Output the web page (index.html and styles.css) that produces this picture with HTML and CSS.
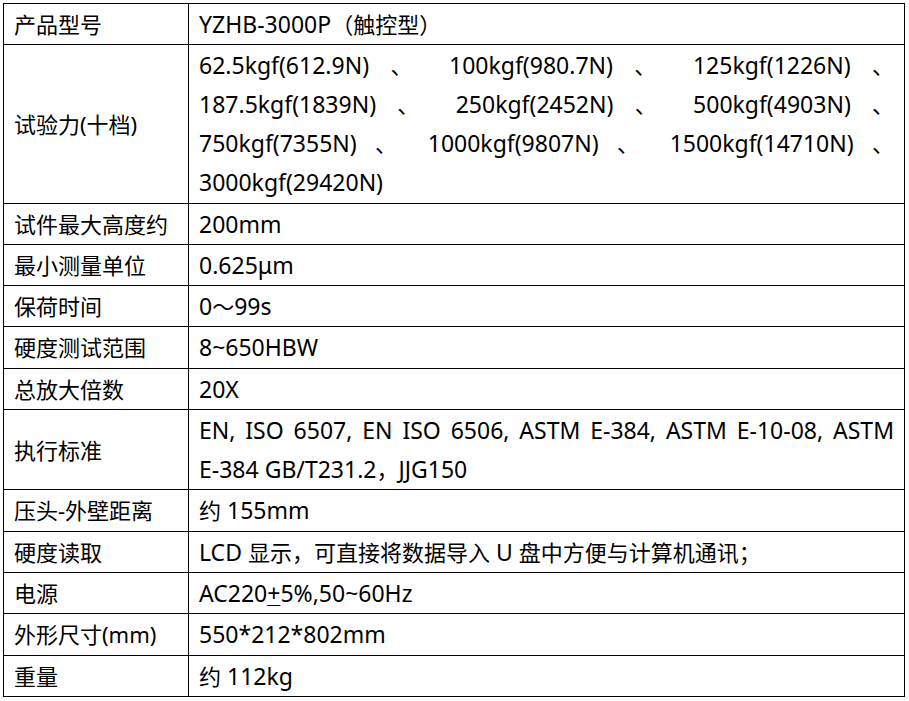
FILE: index.html
```html
<!DOCTYPE html>
<html lang="zh-CN">
<head>
<meta charset="utf-8">
<title>参数</title>
<link rel="stylesheet" href="styles.css">
</head>
<body>
<div class="page">
<table class="spec">
<tr><th>产品型号</th><td>YZHB-3000P<span class="zh">（触控型）</span></td></tr>
<tr><th>试验力(十档)</th><td>
<div class="jl">62.5kgf(612.9N) <span class="zh">、</span> 100kgf(980.7N) <span class="zh">、</span> 125kgf(1226N) <span class="zh">、</span></div>
<div class="jl">187.5kgf(1839N) <span class="zh">、</span> 250kgf(2452N) <span class="zh">、</span> 500kgf(4903N) <span class="zh">、</span></div>
<div class="jl">750kgf(7355N) <span class="zh">、</span> 1000kgf(9807N) <span class="zh">、</span> 1500kgf(14710N) <span class="zh">、</span></div>
<div>3000kgf(29420N)</div>
</td></tr>
<tr><th>试件最大高度约</th><td>200mm</td></tr>
<tr><th>最小测量单位</th><td>0.625μm</td></tr>
<tr><th>保荷时间</th><td>0<span class="zh">～</span>99s</td></tr>
<tr><th>硬度测试范围</th><td>8~650HBW</td></tr>
<tr><th>总放大倍数</th><td>20X</td></tr>
<tr><th>执行标准</th><td>
<div class="jl">EN, ISO 6507, EN ISO 6506, ASTM E-384, ASTM E-10-08, ASTM</div>
<div>E-384 GB/T231.2<span class="zh">，</span>JJG150</div>
</td></tr>
<tr><th>压头-外壁距离</th><td><span class="zh">约</span> 155mm</td></tr>
<tr><th>硬度读取</th><td>LCD <span class="zh">显示，可直接将数据导入</span> U <span class="zh">盘中方便与计算机通讯；</span></td></tr>
<tr><th>电源</th><td>AC220<u>+</u>5%,50~60Hz</td></tr>
<tr><th>外形尺寸(mm)</th><td>550*212*802mm</td></tr>
<tr><th>重量</th><td><span class="zh">约</span> 112kg</td></tr>
</table>
</div>
</body>
</html>
```
FILE: styles.css
```css
html, body {
  margin: 0;
  padding: 0;
  background: #ffffff;
}
.page {
  padding: 3px 0 0 3px;
}
.spec {
  border-collapse: collapse;
  width: 902px;
  font-family: "Noto Sans", "Noto Sans CJK SC", sans-serif;
  color: #000000;
}
.spec th,
.spec td {
  border: 1px solid #000000;
  padding: 1px 10px 0.3px 10px;
  line-height: 39px;
  font-weight: normal;
  text-align: left;
  vertical-align: middle;
  white-space: nowrap;
}
.spec th {
  width: 164px;
  font-size: 22px;
}
.spec td {
  font-size: 23px;
}
.zh {
  font-size: 22px;
}
.jl {
  text-align: justify;
  text-align-last: justify;
}
u {
  text-decoration-thickness: 1px;
  text-underline-offset: 3px;
}
```
